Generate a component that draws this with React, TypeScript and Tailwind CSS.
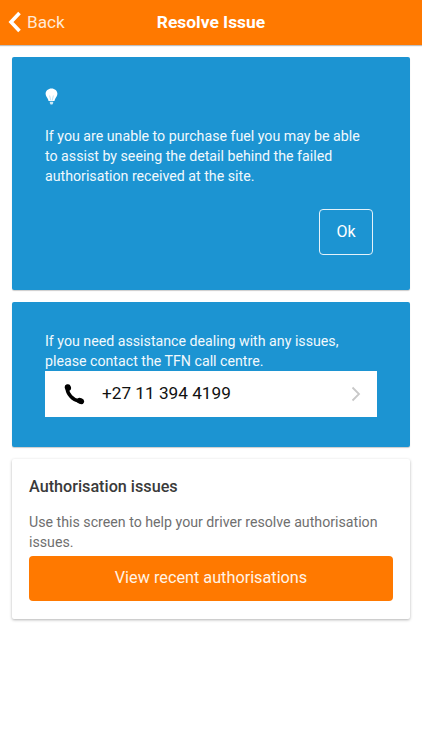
const font = "font-['Roboto',sans-serif]"

function Bulb() {
  return (
    <svg className="h-[17px] w-[13px]" viewBox="0 0 13 17">
      <path
        d="M6.5 0.5C3.2 0.5 0.6 2.9 0.6 5.8c0 2.3 1.7 3.6 2.5 5.6.2.5.3 1 .4 1.6h6c.1-.6.2-1.1.4-1.6.8-2 2.5-3.3 2.5-5.6C12.4 2.9 9.8.5 6.5.5z"
        fill="#fff"
      />
      <path d="M4.8 13.8h3.4v1.2l-.8 1.4H5.6l-.8-1.4z" fill="#cfe8f6" />
      <path d="M4.6 7.5l1.2 5M8.4 7.5l-1.2 5" stroke="#a9d5ee" strokeWidth="0.7" fill="none" />
    </svg>
  )
}

function Phone() {
  return (
    <svg className="h-[21px] w-[21px]" viewBox="0 0 21 21">
      <ellipse cx="3.9" cy="3.6" rx="3.1" ry="3.4" transform="rotate(-18 3.9 3.6)" fill="#000" />
      <ellipse cx="16.4" cy="17" rx="3.8" ry="3" transform="rotate(22 16.4 17)" fill="#000" />
      <path d="M3.2 4.5C3.4 10 8.5 15.8 15 17" stroke="#000" strokeWidth="3.6" fill="none" />
    </svg>
  )
}

export default function App() {
  return (
    <div className={`${font} flex h-[750px] w-[422px] flex-col overflow-hidden bg-white`}>
      <header className="flex h-[45px] shrink-0 items-center bg-[#ff7900] shadow-[0_1px_1px_rgba(0,0,0,0.25)]">
        <div className="flex w-[126px] items-center pl-[8px] text-[17.2px] text-[#ffe9d6]">
          <svg className="mr-[5px] h-[22px] w-[14px]" viewBox="0 0 14 22" fill="none">
            <path d="M11.5 2L3 11l8.5 9" stroke="#fff" strokeWidth="3.6" />
          </svg>
          Back
        </div>
        <h1 className="w-[170px] text-center text-[17.4px] font-bold text-white">Resolve Issue</h1>
      </header>

      <main className="flex flex-col gap-[12px] px-[12px] pt-[12px]">
        <section className="flex h-[233px] flex-col rounded-[2px] bg-[#1c94d2] px-[33px] pt-[31px] shadow-[0_1px_1px_rgba(0,0,0,0.2)]">
          <Bulb />
          <p className="mt-[21px] pr-[8px] text-[14.2px] leading-[20px] text-[#f1f9fd]">
            If you are unable to purchase fuel you may be able to assist by seeing the detail behind the failed authorisation received at the site.
          </p>
          <div className="mt-[23px] flex justify-end pr-[4px]">
            <button className="h-[46px] w-[54px] rounded-[4px] border border-[#e4f2fa] text-[16px] text-white">Ok</button>
          </div>
        </section>

        <section className="h-[145px] rounded-[2px] bg-[#1c94d2] px-[33px] pt-[29px] shadow-[0_1px_1px_rgba(0,0,0,0.2)]">
          <p className="text-[14.2px] leading-[20px] text-[#f1f9fd]">
            If you need assistance dealing with any issues, please contact the TFN call centre.
          </p>
          <div className="flex h-[46px] w-[332px] items-center bg-white pl-[19px] pr-[16px]">
            <Phone />
            <span className="ml-[17px] flex-1 text-[17.2px] text-[#111]">+27 11 394 4199</span>
            <svg className="h-[16px] w-[10px]" viewBox="0 0 10 16" fill="none">
              <path d="M1.5 1.5L8 8l-6.5 6.5" stroke="#c8c8c8" strokeWidth="1.8" />
            </svg>
          </div>
        </section>

        <section className="h-[160px] rounded-[2px] bg-white px-[17px] pt-[18px] shadow-[0_1px_3px_rgba(0,0,0,0.3)]">
          <h2 className="text-[16.2px] leading-[20px] font-medium text-[#3a3a3a]">Authorisation issues</h2>
          <p className="mt-[15px] text-[14.2px] leading-[20px] text-[#6f6f6f]">
            Use this screen to help your driver resolve authorisation issues.
          </p>
          <button className="mt-[4px] flex h-[45px] w-full items-center justify-center rounded-[4px] bg-[#ff7900] text-[16.25px] text-[#fff3e6]">
            View recent authorisations
          </button>
        </section>
      </main>
    </div>
  )
}
